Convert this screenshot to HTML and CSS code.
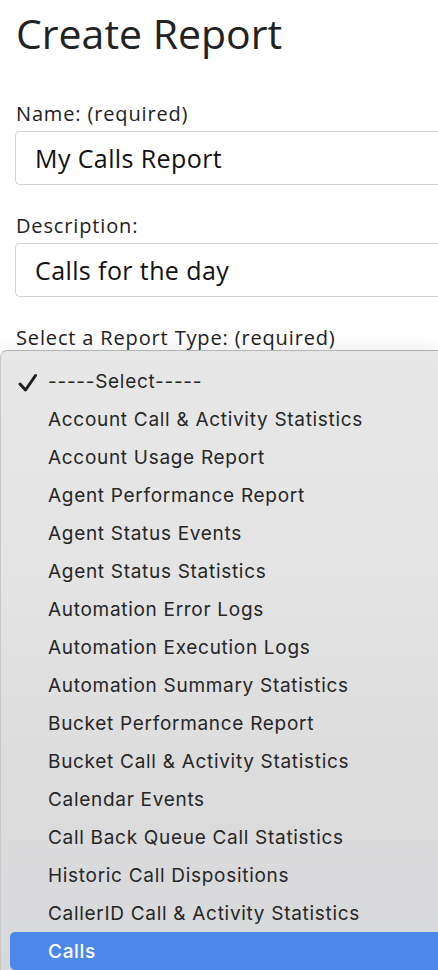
FILE: index.html
```html
<!DOCTYPE html>
<html>
<head>
<meta charset="utf-8">
<link rel="stylesheet" href="styles.css">
</head>
<body>
<main class="page">
  <h1 class="title">Create Report</h1>
  <label class="label">Name: (required)</label>
  <div class="input">My Calls Report</div>
  <label class="label">Description:</label>
  <div class="input">Calls for the day</div>
  <label class="label">Select a Report Type: (required)</label>
</main>
<div class="menu">
  <div class="opt"><span class="check"><svg width="20" height="20" viewBox="0 0 20 20"><path d="M2 11 L7.5 17 L17.5 2.5" fill="none" stroke="#1e1e1e" stroke-width="3" stroke-linecap="round" stroke-linejoin="round"/></svg></span>-----Select-----</div>
  <div class="opt"><span class="check"></span>Account Call &amp; Activity Statistics</div>
  <div class="opt"><span class="check"></span>Account Usage Report</div>
  <div class="opt"><span class="check"></span>Agent Performance Report</div>
  <div class="opt"><span class="check"></span>Agent Status Events</div>
  <div class="opt"><span class="check"></span>Agent Status Statistics</div>
  <div class="opt"><span class="check"></span>Automation Error Logs</div>
  <div class="opt"><span class="check"></span>Automation Execution Logs</div>
  <div class="opt"><span class="check"></span>Automation Summary Statistics</div>
  <div class="opt"><span class="check"></span>Bucket Performance Report</div>
  <div class="opt"><span class="check"></span>Bucket Call &amp; Activity Statistics</div>
  <div class="opt"><span class="check"></span>Calendar Events</div>
  <div class="opt"><span class="check"></span>Call Back Queue Call Statistics</div>
  <div class="opt"><span class="check"></span>Historic Call Dispositions</div>
  <div class="opt"><span class="check"></span>CallerID Call &amp; Activity Statistics</div>
  <div class="opt active"><span class="check"></span>Calls</div>
</div>
</body>
</html>
```
FILE: styles.css
```css
html, body {
  margin: 0;
  padding: 0;
  background: #fff;
  overflow: hidden;
}
body {
  width: 438px;
  height: 970px;
  position: relative;
  font-family: "Open Sans", "Noto Sans", sans-serif;
  color: #212529;
}
.page {
  padding: 0 0 0 15px;
  display: flex;
  flex-direction: column;
}
.title {
  margin: 5px 0 0 1px;
  font-size: 41px;
  font-weight: 400;
  line-height: 56px;
  color: #222;
}
.label {
  margin: 41px 0 0 1px;
  font-size: 20px;
  line-height: 24px;
  letter-spacing: 0.85px;
  color: #222;
}
.label + .input { margin-top: 5px; }
.input + .label { margin-top: 29px; }
.input {
  height: 52px;
  border: 1px solid #d3d3d3;
  border-right: 0;
  border-radius: 5px 0 0 5px;
  padding: 0 0 0 19px;
  display: flex;
  align-items: center;
  font-size: 25px;
  letter-spacing: 0.4px;
  color: #111;
}
.menu {
  position: absolute;
  top: 350px;
  left: 0;
  right: 0;
  height: 620px;
  box-sizing: border-box;
  border-top: 1px solid #b4b4b4;
  border-left: 1px solid #c8c8c8;
  border-radius: 7px 0 0 0;
  background: linear-gradient(#e7e7e7, #e4e4e4 35%, #dcdcdd 70%, #d7d8da);
  box-shadow: 0 -6px 14px rgba(0,0,0,0.05);
  padding: 11px 0 0 9px;
  font-family: "Inter", "Liberation Sans", sans-serif;
  font-size: 19px;
  letter-spacing: 0.7px;
  color: #262626;
}
.opt {
  height: 38px;
  display: flex;
  align-items: center;
  border-radius: 5px 0 0 5px;
}
.check {
  width: 38px;
  flex: none;
  display: flex;
  align-items: center;
  padding: 3px 0 0 8px;
  box-sizing: border-box;
}
.active {
  background: #4c88ea;
  color: #fff;
  font-weight: 500;
}
```
